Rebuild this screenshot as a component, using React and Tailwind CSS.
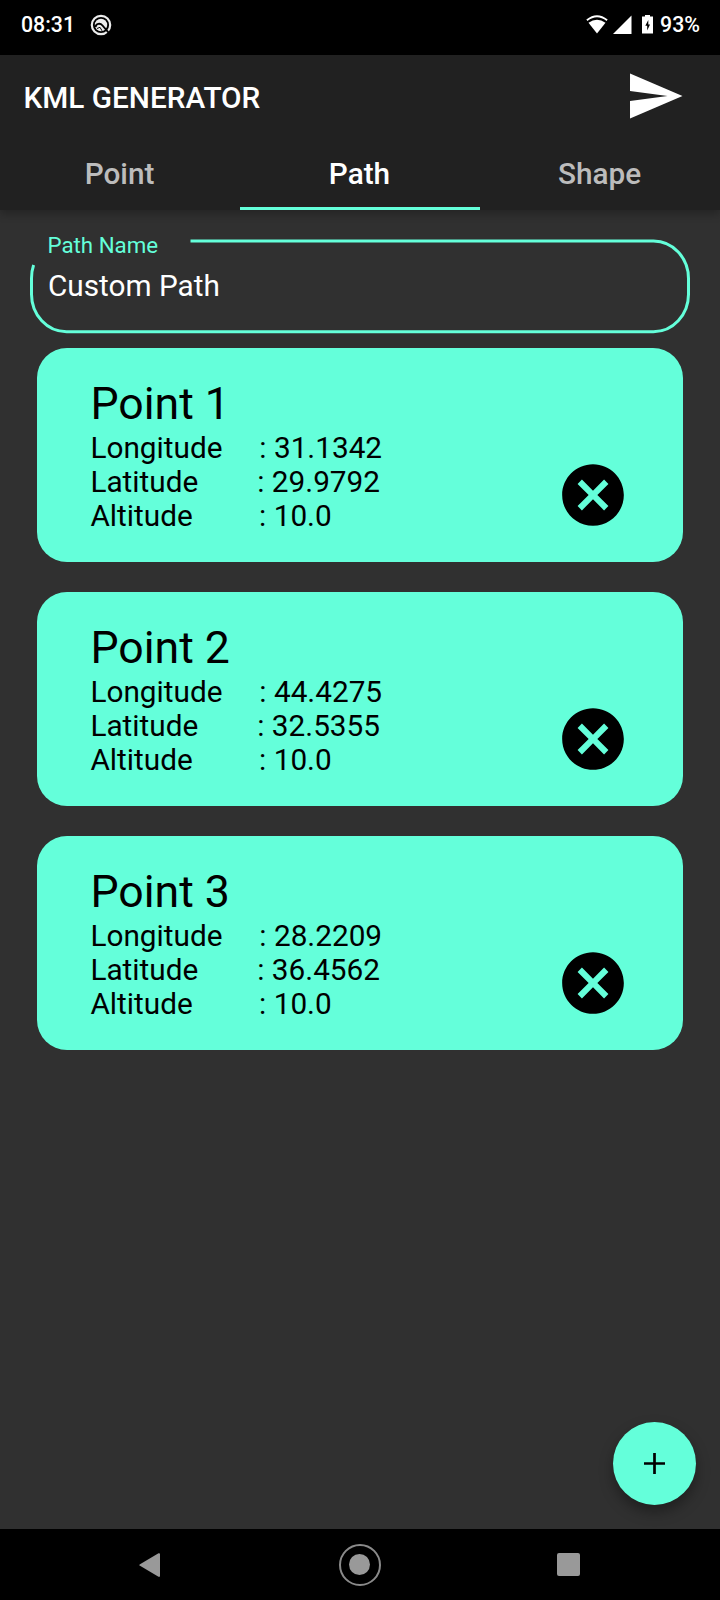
import React, { useState } from 'react'
import { MdCancel, MdSend } from 'react-icons/md'

const tabs = ['Point', 'Path', 'Shape']

// labels are padded with spaces so that the colons line up
const points = [
  { id: 1, longitude: '31.1342', latitude: '29.9792', altitude: '10.0' },
  { id: 2, longitude: '44.4275', latitude: '32.5355', altitude: '10.0' },
  { id: 3, longitude: '28.2209', latitude: '36.4562', altitude: '10.0' },
]

const StatusBar = () => {
  return (
    <div className="flex h-[55px] items-center justify-between bg-black pl-[21px] pr-5 pb-[6px] text-[21.3px] font-medium text-white">
      <div className="flex items-center gap-[15px]">
        <span className="pt-px">08:31</span>
        <svg className="size-[22px]" viewBox="0 0 22 22" fill="none">
          <circle cx="11" cy="11" r="9.2" stroke="#ededed" strokeWidth="2.200" />
          <circle cx="11" cy="11" r="6.200" fill="#ededed" />
          <path d="M5.500 13C6 9.500 10 8.500 12.500 11.500L18.800 18.800" stroke="#000" strokeWidth="1.900" />
          <path d="M7 14.500l3-1.200 2 3.500" stroke="#000" strokeWidth="1" />
        </svg>
      </div>
      <div className="flex items-center">
        <svg className="h-5 w-[22px]" viewBox="0 0 22 20" fill="none">
          <path d="M.900 5.200Q11-2.800 21.100 5.200" stroke="#fff" strokeWidth="1.900" />
          <path d="M2.500 7.800Q11 1.800 19.500 7.800L11 18.500z" fill="#fff" />
        </svg>
        <svg className="ml-[5px] h-5 w-[19px]" viewBox="0 0 19 20">
          <path d="M0 19L18.500 .5v18.500z" fill="#fff" />
        </svg>
        <svg className="ml-[10px] h-5 w-[11px]" viewBox="0 0 11 20">
          <path d="M3 0h5v1.500H11V18.500H0V1.500h3z" fill="#fff" />
          <path d="M6.300 5L3.300 10.800h1.900V15.500L8 9.500H6.300z" fill="#000" />
        </svg>
        <span className="ml-[7px] pt-px">93%</span>
      </div>
    </div>
  )
}

const AppHeader = ({ activeTab, setActiveTab }) => {
  return (
    <header className="relative h-[155px] bg-[#212121] shadow-[0_4px_8px_rgba(0,0,0,0.25)]">
      <div className="flex h-[82px] items-center justify-between pl-[23.5px] pr-[35.5px]">
        <h1 className="pt-[5px] text-[29.75px] font-medium text-white">KML GENERATOR</h1>
        <button type="button" aria-label="Send">
          <MdSend className="size-[60px] text-white" />
        </button>
      </div>
      <nav className="grid h-[73px] grid-cols-3">
        {tabs.map((tab) => (
          <button
            key={tab}
            type="button"
            onClick={() => setActiveTab(tab)}
            className={`border-b-3 pt-[5px] pr-px text-[29.75px] font-medium ${
              activeTab === tab
                ? 'border-[#64ffda] text-white'
                : 'border-transparent text-[#bcbcbc]'
            }`}
          >
            {tab}
          </button>
        ))}
      </nav>
    </header>
  )
}

const PathNameField = () => {
  return (
    <label className="relative mx-[30px] mt-[29px] flex h-[95px] flex-col pl-[18px]">
      {/* outline, open around the floating label */}
      <svg className="absolute inset-0 h-[95px] w-[660px]" viewBox="0 0 660 95" fill="none">
        <path
          d="M160.500 2H623.500a35 37.500 0 0 1 35 37.500V55.300a35 37.500 0 0 1 -35 37.500H36.500a35 37.500 0 0 1 -35 -37.500V39.500Q1.500 32 3.600 26"
          stroke="#64ffda"
          strokeWidth="3"
        />
      </svg>
      <span className="-mt-[7px] -ml-[0.500px] text-[22.3px] leading-[26px] text-[#64ffda]">Path Name</span>
      <input
        type="text"
        defaultValue="Custom Path"
        className="relative mt-[11px] h-[34px] bg-transparent text-[29.75px] text-white outline-none"
      />
    </label>
  )
}

const PointCard = ({ point }) => {
  return (
    <div className="flex h-[214px] items-end justify-between rounded-[30px] bg-[#64ffda] pl-[53px] pr-[53px] text-black">
      <div className="pb-[29px]">
        <h2 className="pb-px text-[44.6px] leading-[52px]">Point {point.id}</h2>
        <div className="text-[29.75px] leading-[34px] whitespace-pre">
          <p>{`Longitude     : ${point.longitude}`}</p>
          <p>{`Latitude        : ${point.latitude}`}</p>
          <p>{`Altitude         : ${point.altitude}`}</p>
        </div>
      </div>
      <button type="button" aria-label="Remove point" className="mb-[30px]">
        <MdCancel className="size-[74px]" />
      </button>
    </div>
  )
}

const NavigationBar = () => {
  return (
    <div className="flex h-[71px] items-center justify-center gap-[176px] bg-black pr-px">
      <svg className="size-6" viewBox="0 0 24 24">
        <path d="M1 11.200L19.500 .3Q21 0 21 1V23Q21 24.200 19.500 23.700L1 12.800Q-.5 12 1 11.200z" fill="#999" />
      </svg>
      <div className="flex size-[42px] items-center justify-center rounded-full border-2 border-[#8a8a8a]">
        <div className="size-[21px] rounded-full bg-[#999]" />
      </div>
      <div className="w-6">
        <div className="size-[23px] rounded-[2px] bg-[#999]" />
      </div>
    </div>
  )
}

const App = () => {
  const [activeTab, setActiveTab] = useState('Path')

  return (
    <div className="flex h-[1600px] w-[720px] flex-col bg-[#303030] font-[Roboto,sans-serif]">
      <StatusBar />
      <AppHeader activeTab={activeTab} setActiveTab={setActiveTab} />
      <main className="relative flex flex-1 flex-col overflow-hidden">
        <PathNameField />
        <div className="mt-[14px] flex flex-col gap-[30px] pl-[37.4px] pr-[37px]">
          {points.map((point) => (
            <PointCard key={point.id} point={point} />
          ))}
        </div>
        <button
          type="button"
          aria-label="Add point"
          className="absolute right-6 bottom-6 flex size-[83px] items-center justify-center rounded-full bg-[#64ffda] shadow-[0_7px_14px_rgba(0,0,0,0.35)]"
        >
          <svg className="size-[21px]" viewBox="0 0 21 21">
            <path d="M0 10.500h21M10.500 0v21" stroke="#000" strokeWidth="2.700" />
          </svg>
        </button>
      </main>
      <NavigationBar />
    </div>
  )
}

export default App
